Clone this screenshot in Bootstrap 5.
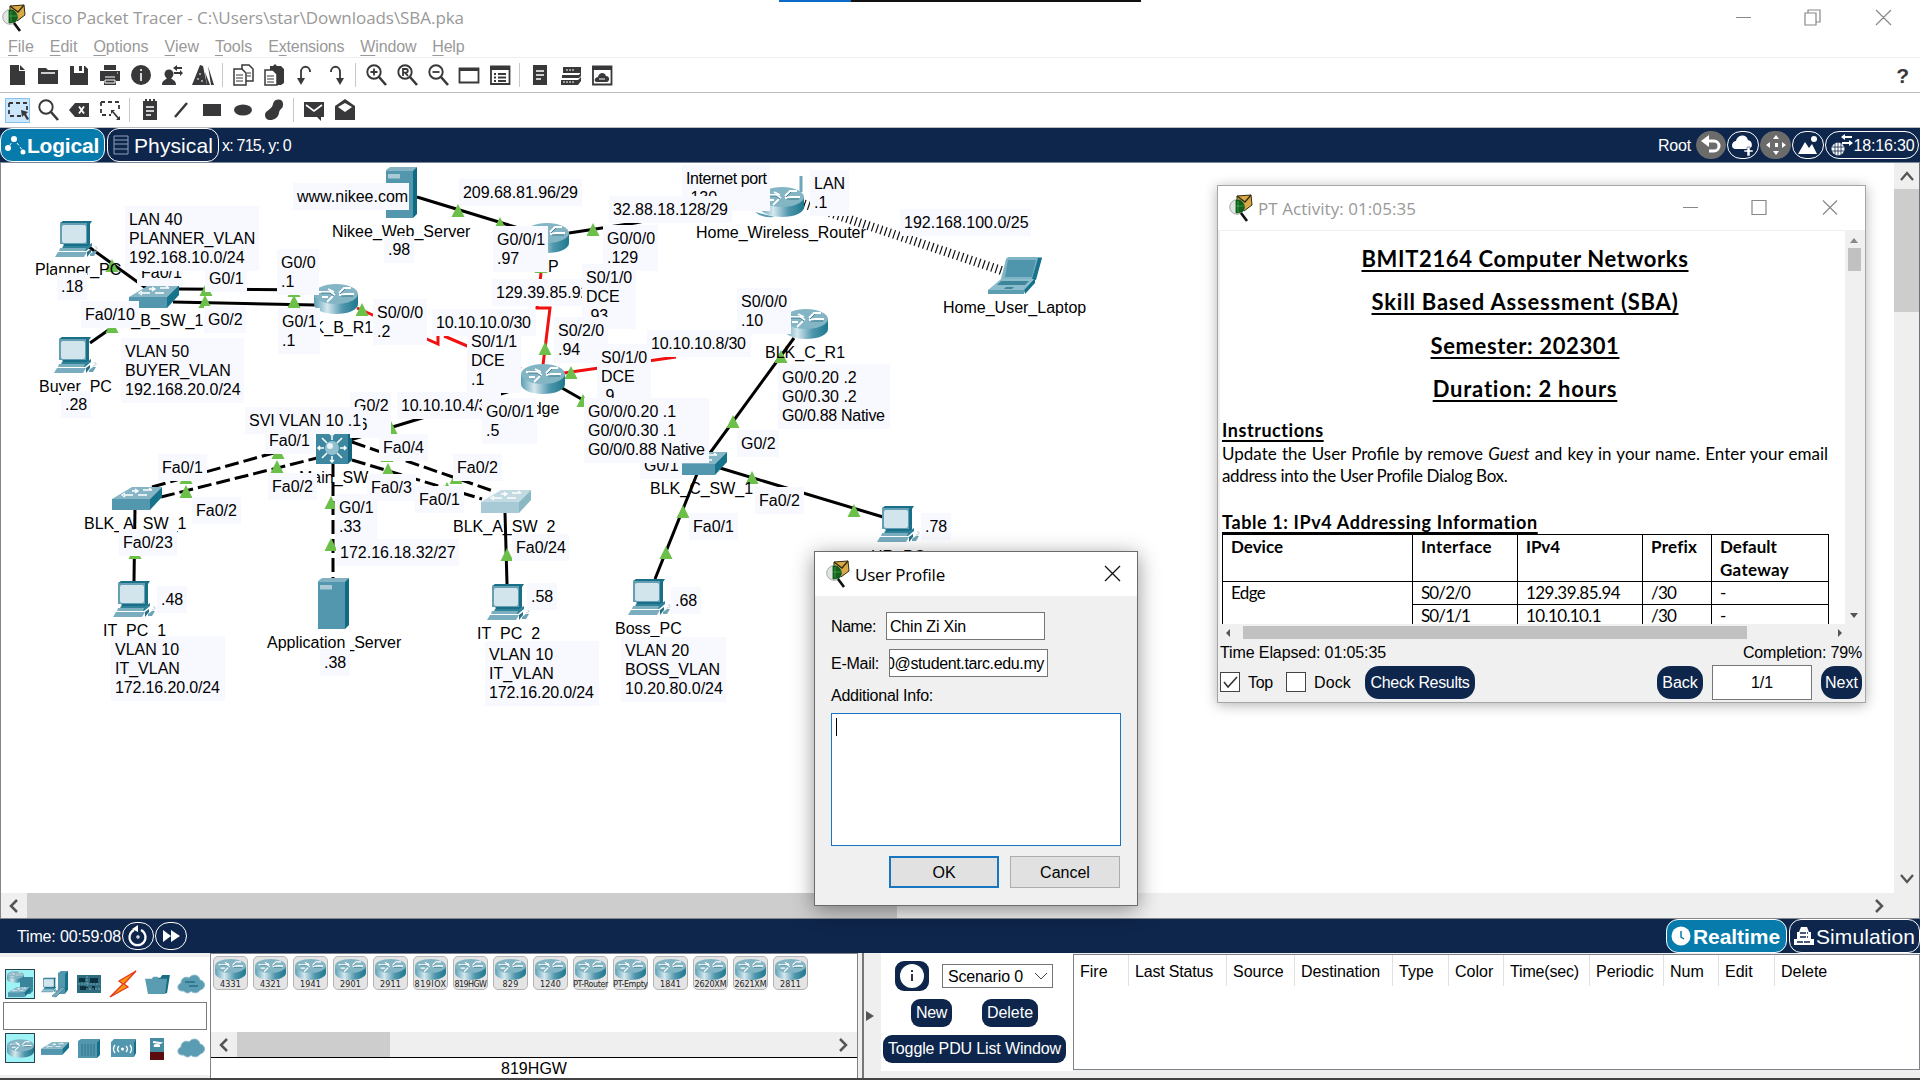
<!DOCTYPE html>
<html lang="en">
<head>
<meta charset="utf-8">
<title>Cisco Packet Tracer</title>
<link href="https://cdn.jsdelivr.net/npm/bootstrap@5.3.0/dist/css/bootstrap.min.css" rel="stylesheet">
<style>
html,body{height:100%;overflow:hidden}
body{width:1920px;height:1080px;background:#fff;font:16px/19px "Liberation Sans",Arial,sans-serif;color:#000}
svg{display:block;flex:none}
.ttl{font-family:"Open Sans","Noto Sans",sans-serif;font-size:17px;white-space:nowrap}
.app-title{height:35px;color:#999}
.topmark{left:779px;top:0;width:362px;height:2px;background:linear-gradient(90deg,#0a6cc8 72px,#111 72px)}
.menus{height:23px;gap:16px;padding:2px 0 0 8px;color:#999;border-bottom:1px solid #eee}
.menus u{text-underline-offset:3px}
.tools{height:35px;border-bottom:1px solid #bcbcbc;padding-left:1px;color:#38383a}
.cell{width:31px;height:25px;display:flex;align-items:center;justify-content:center;flex:none}
.cell svg{width:24px;height:24px}
.sel{width:25px;margin:0 3px 0 4px;background:#cce6fb;border:1px solid #84c3f0}
.sel + .cell{margin-left:-1px}
.sep{width:1px;height:24px;background:#c8c8c8;margin:0 4px;flex:none}
.navy{background:#0e264b;color:#fff;height:35px;flex:none}
.navy.upper{border-bottom:1px solid #7b8798}
.tab{height:34px;border:1px solid #fff;border-radius:12px;display:flex;align-items:center;font-size:21px;white-space:nowrap;flex:none}
.tab.on{background:#067bac;font-weight:700}
.pill{height:28px;border:1px solid #fff;border-radius:14px;display:flex;align-items:center;justify-content:center;flex:none}
.pill.grey{background:#6b6b6b;border-color:#6b6b6b}
.stage{height:756px;border-left:1px solid #85868a;border-bottom:1px solid #85868a;flex:none}
.bar{background:#efefef;color:#505050}
.thumb{background:#cdcdcd}
.topo text{font-size:16px;fill:#000}
.lower{height:125px;background:#efefef;flex:none}
.kit{width:210px;margin:4px 0 3px;background:#fff;padding:12px 0 0 3px}
.kit .kcell{width:34px;height:30px;display:flex;align-items:center;justify-content:center}
.kit .pick{width:30px;margin:0 3px 0 2px;background:#9df3f6;border:1px solid #26424d}
.finder{width:204px;height:28px;border:1px solid #7a7a7a;margin:3px 0 3px}
.models{width:648px;border:1px solid #7d828b;border-bottom:0;background:#fff}
.tile{width:35px;height:34px;border:1px solid #b5b5b5;border-radius:5px;background:#e4e4e4;font:8px/9px "DejaVu Sans",sans-serif;text-align:center;color:#222;display:flex;flex-direction:column;align-items:center;padding-top:2px;letter-spacing:-.3px;white-space:nowrap}
.split{width:15px;margin-left:4px;border-left:2px solid #777;background:#efefef}
.pdu{width:192px;background:#fff;height:118px;padding:8px 0 0 2px}
.nbtn{background:#0e264b;color:#fff;border:0;border-radius:9px;padding:0;height:28px;line-height:28px;text-align:center;white-space:nowrap;flex:none}
.ptable{width:847px;height:116px;border:1px solid #7d828b;background:#fff;margin-top:1px}
.ptable>span{height:31px;padding:7px 0 0 6px;border-right:1px solid #e1e1e1;flex:none;white-space:nowrap;line-height:19px}
.win{position:absolute;z-index:5;display:flex;flex-direction:column;background:#f0f0f0}
.act{left:1217px;top:185px;width:649px;height:518px;border:1px solid #a6a6a6;box-shadow:0 2px 12px rgba(0,0,0,.3)}
.prof{left:814px;top:551px;width:324px;height:355px;border:1px solid #6b6b6b;box-shadow:0 4px 20px rgba(0,0,0,.42)}
.wtitle{height:44px;background:#fff;flex:none;display:flex;align-items:center}
.doc{font-family:Lato,"Open Sans",sans-serif;background:#fff;width:625px;height:393px;overflow:hidden;white-space:nowrap;padding:0 0 0 2px}
.doc h1{font-size:22px;line-height:44px;height:43.7px;font-weight:700;margin:0;text-align:center;width:606px}
.doc h2{font-size:18px;line-height:22px;font-weight:700;margin:0}
.doc h1 span,.doc h2 span{text-decoration:underline;text-decoration-thickness:2px;text-underline-offset:3px;text-decoration-skip-ink:none}
.doc p{margin:0;line-height:22px;font-size:17px}
.grid5{border-collapse:collapse;width:607px;table-layout:fixed;font-size:17px;line-height:23px}
.grid5 td,.grid5 th{border:1px solid #000;padding:0 0 0 8px;vertical-align:top;height:23px}
.grid5 td{line-height:22px}
.sbox{background:#fff;border:1px solid #767676;flex:none}
.winbtn{background:#e1e1e1;border:1px solid #adadad;width:110px;height:32px;border-radius:0;padding:2px 0 0;line-height:28px}
.winbtn.def{border:2px solid #1a75c0;padding-top:1px}
</style>
</head>
<body class="d-flex flex-column position-relative">
<svg width="0" height="0" class="position-absolute">
<defs>
<linearGradient id="gr" x1="0" x2="1"><stop offset="0" stop-color="#5a9fb4"/><stop offset=".3" stop-color="#d5e8ee"/><stop offset=".65" stop-color="#4f96ac"/><stop offset="1" stop-color="#1d788e"/></linearGradient>
<symbol id="logo" viewBox="0 0 24 28"><path d="M8 2L22 1 23 11 15 17 8 12Z" fill="#d9a946" stroke="#332a10"/><path d="M8 2l8 6 6-7" fill="none" stroke="#332a10" stroke-width="1.3"/><circle cx="8" cy="13" r="7.3" fill="#dfe5df" stroke="#aaa"/><path d="M7 6a7 7 0 0 1 6 12l-6 1z" fill="#155e1e" stroke="#051" stroke-width=".8"/><path d="M9 7v11M7 12h8" stroke="#47b64d" stroke-width=".7"/><path d="M12 19l6 8" stroke="#111" stroke-width="2.6"/></symbol>
<symbol id="router" viewBox="0 0 44 30"><path d="M0 10v10c0 6 10 10 22 10s22-4 22-10V10z" fill="url(#gr)"/><ellipse cx="22" cy="10" rx="22" ry="10" fill="#84b5c4"/><path d="M5 8h11l5 3M14 5l6 3M25 9l5-5h7M25 11l6-1h9M19 12l-6 6M8 13h6" fill="none" stroke="#fff" stroke-width="1.8"/><path d="M7 9h9l4 3M26 10l5-5M27 12h12" fill="none" stroke="#2f7184" stroke-width=".8"/></symbol>
<symbol id="switch" viewBox="0 0 50 23"><path d="M0 12L20 0h30L38 12z" fill="#86b6c6"/><path d="M0 12h38v11H0z" fill="#5397af"/><path d="M38 12L50 0v10L38 23z" fill="#17738b"/><path d="M20 4h6m-3-2l3 2-3 2M31 3h9m-3-2l3 2M12 8h9m-8-2l-3 2 3 2M26 8h9" stroke="#fff" stroke-width="1.3" fill="none"/></symbol>
<symbol id="pc" viewBox="0 0 44 36"><path d="M5 2L8 0H37L35 3V24L31 27H9z" fill="#186f87"/><path d="M5 2H32V23H5z" fill="#659fb3"/><rect x="7" y="4" width="24" height="18" rx="2" fill="#d3e5ec"/><path d="M8 25h24l5-3v3l-6 5H6z" fill="#2f8298"/><path d="M5 27h26l-1 3H4z" fill="#7bb0c1"/><path d="M3 31h29l-3 5H0z" fill="#79adbf"/><path d="M32 31l4-3v3l-4 5z" fill="#286f84"/><path d="M35 33l4-3h3l-3 5h-4z" fill="#6ba4b6"/><path d="M39 29c4 0 4-4 1-3" fill="none" stroke="#b7cbd2"/></symbol>
<symbol id="server" viewBox="0 0 31 51"><path d="M0 3L4 0H31L28 4H0z" fill="#83b3c2"/><path d="M0 4h27v47H0z" fill="#5297ae"/><path d="M27 4l4-4v47l-4 4z" fill="#0f6b82"/><rect x="2" y="7" width="12" height="4.500" fill="#a8cbd6"/></symbol>
<symbol id="laptop" viewBox="0 0 54 37"><path d="M18 2L20 0H54L47 22H13z" fill="#7fb4c4"/><path d="M20 3H48L44 20H17z" fill="#4f95ac"/><path d="M50 1l4 0-6 22-4-1z" fill="#17738b"/><path d="M13 22H46L36 33H0z" fill="#8bbccb"/><path d="M0 33h36v4H0z" fill="#5c9db2"/><path d="M36 33L47 21v5L37 37z" fill="#14708a"/><path d="M13 24h28l-4 4H9z" fill="#3e849b"/><path d="M18 30h8l-2 2h-8z" fill="#3e849b"/></symbol>
<symbol id="core" viewBox="0 0 36 36"><path d="M0 4L4 0H36L32 4V36H0z" fill="#3d88a0"/><path d="M32 4l4-4v32l-4 4z" fill="#14667c"/><g stroke="#fff" stroke-width="1.500" fill="none"><path d="M16 5v7M14 7l2-2 2 2M16 28v6M14 32l2 2 2-2M2 20h6M4 18l-2 2 2 2M24 20h6M28 18l2 2-2 2M6 10l5 5M26 10l-5 5M6 30l5-5M26 30l-5-5"/></g><circle cx="16" cy="20" r="7" fill="#93c0ce"/><circle cx="14" cy="18" r="3" fill="#e9f4f7"/></symbol>
<symbol id="cloud" viewBox="0 0 28 20"><path d="M7 17C0 18-1 11 4 9 4 4 9 2 12 4c4-5 10-3 11 2 6 1 6 9 0 10-2 4-8 3-9 1-2 3-6 2-7 0z" fill="#5a9db3" stroke="#86b8c8"/></symbol>
<symbol id="mag" viewBox="0 0 24 24"><circle cx="10" cy="9" r="6.700" fill="none" stroke="currentColor" stroke-width="1.900"/><path d="M15 14l7 8" stroke="currentColor" stroke-width="2.600"/></symbol>
<symbol id="fold" viewBox="0 0 28 22"><path d="M9 4h8l2-3h8l-3 19-4 1H8z" fill="#166c80"/><path d="M1 5h7l2-2h4l1 2h9l-2 16H4z" fill="#5a9db3"/></symbol>
</defs></svg>

<div class="position-absolute topmark"></div>
<header class="bg-white flex-shrink-0">
 <div class="app-title d-flex align-items-center">
  <svg width="24" height="28" style="margin:0 5px 0 2px"><use href="#logo"/></svg><span class="ttl" data-w="433">Cisco Packet Tracer - C:\Users\star\Downloads\SBA.pka</span>
  <svg width="170" height="20" class="ms-auto me-3" viewBox="0 0 170 20" fill="none" stroke="#888" stroke-width="1.200"><path d="M2 9.500h15M71 5h11v12H71zM74 5V2h12v12h-4M142 2l15 15M157 2l-15 15"/></svg>
 </div>
 <nav class="menus d-flex"><span><u>F</u>ile</span><span><u>E</u>dit</span><span><u>O</u>ptions</span><span><u>V</u>iew</span><span><u>T</u>ools</span><span data-w="76">E<u>x</u>tensions</span><span data-w="56"><u>W</u>indow</span><span data-w="32"><u>H</u>elp</span></nav>
 <div class="tools d-flex align-items-center" id="main"></div>
 <div class="tools d-flex align-items-center" id="draw"></div>
</header>

<div class="navy upper d-flex align-items-center">
 <div class="tab on" style="width:105px"><svg width="22" height="24" viewBox="0 0 22 24" class="ms-1" fill="#fff"><circle cx="9" cy="6" r="3"/><circle cx="3" cy="15" r="3"/><circle cx="18" cy="19" r="2.500"/><path d="M9 6l-6 9M9 6l9 12" stroke="#fff" stroke-dasharray="3 2"/></svg><span data-w="72">Logical</span></div>
 <div class="tab" style="width:112px;margin-left:2px"><svg width="16" height="20" viewBox="0 0 16 20" style="margin:0 5px 0 5px" fill="none" stroke="#8da0b8"><path d="M1 1h14v18H1zM1 5h14M1 9h14M1 14h14"/></svg><span data-w="79">Physical</span></div>
 <span data-w="69" style="margin-left:3px">x: 715, y: 0</span>
 <div class="ms-auto d-flex align-items-center" style="gap:1px;padding-right:1px">
  <span class="me-1" data-w="33">Root</span>
  <span class="pill grey" style="width:30px"><svg width="22" height="22" viewBox="0 0 22 22"><path d="M7 7h7a5 5 0 0 1 0 10H9" fill="none" stroke="#fff" stroke-width="3"/><path d="M1 7l8-6v12z" fill="#fff"/></svg></span>
  <span class="pill" style="width:32px"><svg width="24" height="22" viewBox="0 0 24 22" fill="#fff"><path d="M4 15c-5-1-3-8 1-8 1-6 10-8 12-1 5 1 5 8 1 9z"/><path d="M16 13h3v3h3v2h-3v4h-3v-4h-3v-2h3z" stroke="#0e264b" stroke-width=".5"/></svg></span>
  <span class="pill grey" style="width:31px"><svg width="22" height="22" viewBox="0 0 22 22" fill="#fff"><path d="M11 1l3 4H8zM11 21l3-4H8zM1 11l4-3v6zM21 11l-4-3v6zM10 9h3v4h-3z"/></svg></span>
  <span class="pill" style="width:32px"><svg width="22" height="20" viewBox="0 0 22 20" fill="#fff"><path d="M1 19L8 7l4 6 3-4 5 10z"/><circle cx="17" cy="4" r="3"/></svg></span>
  <span class="pill" style="width:94px"><svg width="24" height="24" viewBox="0 0 24 24"><circle cx="8" cy="16" r="6.500" fill="#fff"/><path d="M8 9v14M2 14h12M2 18h12M5 10v12M11 10v12" stroke="#0e264b" stroke-width=".8"/><path d="M13 4h9M12 10h8" stroke="#fff" stroke-width="2"/><path d="M15 1v6l-4-3zM19 7v6l4-3z" fill="#fff"/></svg><span data-w="61">18:16:30</span></span>
 </div>
</div>

<main class="stage d-flex">
 <div class="flex-grow-1 d-flex flex-column">
  <svg class="topo" id="topo" width="1893" height="730" viewBox="1 163 1893 730"></svg>
  <div class="bar d-flex align-items-center" style="height:25px"><svg width="26" height="24"><path d="M16 6l-6 6 6 6" fill="none" stroke="#555" stroke-width="2.500"/></svg><div class="thumb h-100" style="width:870px"></div><svg class="ms-auto" width="26" height="24"><path d="M8 6l6 6-6 6" fill="none" stroke="#555" stroke-width="2.500"/></svg></div>
 </div>
 <div class="bar d-flex flex-column align-items-center border-end border-secondary" style="width:26px"><svg width="26" height="26"><path d="M7 17l6-7 6 7" fill="none" stroke="#555" stroke-width="2.300"/></svg><div class="thumb w-100" style="height:123px"></div><svg class="mt-auto" style="margin-bottom:26px" width="26" height="26"><path d="M7 9l6 7 6-7" fill="none" stroke="#555" stroke-width="2.300"/></svg></div>
</main>

<div class="navy d-flex align-items-center" style="height:34px">
 <span data-w="104" style="margin-left:17px">Time: 00:59:08</span>
 <span class="pill" style="width:32px;margin:0 1px"><svg width="22" height="22" viewBox="0 0 22 22" fill="none" stroke="#fff" stroke-width="2.200"><path d="M7 5a8 8 0 1 0 7 0"/><path d="M5 4l6-4v7z" fill="#fff" stroke="none"/><circle cx="11" cy="12" r=".6"/></svg></span>
 <span class="pill" style="width:32px"><svg width="20" height="16" viewBox="0 0 20 16" fill="#fff"><path d="M2 2l8 6-8 6zM10 2l9 6-9 6z"/></svg></span>
 <div class="tab on ms-auto" style="width:121px"><svg width="23" height="24" viewBox="0 0 23 24" style="margin-left:3px"><circle cx="11" cy="12" r="9.500" fill="#fff"/><path d="M11 7v6l3 2" fill="none" stroke="#067bac" stroke-width="1.500"/></svg><span data-w="87">Realtime</span></div>
 <div class="tab" style="width:131px;margin-left:2px"><svg width="24" height="24" viewBox="0 0 24 24" fill="#fff" style="margin-left:2px"><path d="M5 15V8h2l2-5h6l2 5h2v7h3v6H2v-6z"/><path d="M8 9h8M8 13h8M5 18h14" stroke="#0e264b" stroke-width="1.500" stroke-dasharray="6 1"/></svg><span data-w="99">Simulation</span></div>
</div>

<footer class="lower d-flex">
 <div class="kit">
  <div class="d-flex">
   <div class="kcell pick"><svg width="28" height="28" viewBox="0 0 28 28"><use href="#router" width="17" height="12" x="1" y="1"/><path d="M14 10l3-3h10v14l-3 3H14z" fill="#37849b"/><use href="#switch" width="22" height="12" x="2" y="16"/></svg></div>
   <div class="kcell"><svg width="28" height="28" viewBox="0 0 28 28"><path d="M17 3l3-2h7v19l-3 4h-7z" fill="#5397af"/><path d="M24 4l3-3v18l-3 4z" fill="#14708a"/><use href="#pc" width="18" height="16" y="7"/><path d="M11 26l10-9 3 1-9 9z" fill="#75aabd" stroke="#2b7389" stroke-width=".6"/></svg></div>
   <div class="kcell"><svg width="26" height="20" viewBox="0 0 26 20"><path d="M1 1h24v18H1z" fill="#2f6c80"/><path d="M3 4h6v4H3zM14 4h8v5h-8zM4 12h8v4H4zM16 12h3v4h-3z" fill="#0c313f"/><path d="M2 10h22M11 2v15M13 15h11" stroke="#8ab8c6" stroke-width=".8" stroke-dasharray="2 1"/></svg></div>
   <div class="kcell"><svg width="28" height="28" viewBox="0 0 28 28"><path d="M27 1L10 11l4 3L1 27l18-10-4-3z" fill="#f69a13" stroke="#e8361b" stroke-width="1.300"/></svg></div>
   <div class="kcell"><svg width="27" height="21"><use href="#fold"/></svg></div>
   <div class="kcell"><svg width="28" height="20" viewBox="0 0 28 20"><use href="#cloud"/><path d="M8 8h10M12 12h9" stroke="#266e83" stroke-width="1.500"/></svg></div>
  </div>
  <div class="finder"></div>
  <div class="d-flex">
   <div class="kcell pick"><svg width="27" height="19"><use href="#router"/></svg></div>
   <div class="kcell"><svg width="28" height="15"><use href="#switch"/></svg></div>
   <div class="kcell"><svg width="24" height="21" viewBox="0 0 24 21"><path d="M1 3l3-2h19l-3 3v16H1z" fill="#5397af"/><path d="M20 4l3-3v16l-3 3z" fill="#14708a"/><path d="M5 6v12M8 6v12M11 6v12M14 6v12M17 6v12" stroke="#2f7489"/></svg></div>
   <div class="kcell"><svg width="27" height="20" viewBox="0 0 27 20"><path d="M1 4l3-3h22l-2 3v15H1z" fill="#5397af"/><path d="M24 4l2-3v14l-2 4z" fill="#14708a"/><circle cx="12.500" cy="11" r="1.500" fill="#fff"/><path d="M9 8q-3 3 0 6M5 7q-3 4 0 8M16 8q3 3 0 6M20 7q3 4 0 8" stroke="#fff" fill="none" stroke-width="1.300"/></svg></div>
   <div class="kcell"><svg width="16" height="25" viewBox="0 0 16 25"><path d="M1 2h14v15H1z" fill="#468ca3"/><path d="M1 16h14v8H1z" fill="#5b0c0f"/><path d="M4 6l7 1-6 3h6" fill="none" stroke="#fff" stroke-width="2"/></svg></div>
   <div class="kcell"><svg width="28" height="20"><use href="#cloud"/></svg></div>
  </div>
 </div>
 <div class="models d-flex flex-column">
  <div class="d-flex" id="tiles" style="gap:5px;padding:2px 0 0 2px;height:80px"></div>
  <div class="bar d-flex align-items-center" style="height:25px"><svg width="26" height="24"><path d="M16 6l-6 6 6 6" fill="none" stroke="#555" stroke-width="2.500"/></svg><div class="thumb h-100" style="width:153px"></div><svg class="ms-auto" width="28" height="24"><path d="M11 6l6 6-6 6" fill="none" stroke="#555" stroke-width="2.500"/></svg></div>
  <div class="text-center flex-grow-1 bg-white" style="border-top:1px solid #000;padding-top:1px"><span data-w="66">819HGW</span></div>
 </div>
 <div class="split d-flex align-items-center"><svg width="11" height="12"><path d="M2 1l8 5-8 5z" fill="#555"/></svg></div>
 <div style="width:4px"></div>
 <div class="pdu">
  <div class="d-flex align-items-center" style="padding-left:12px"><span class="nbtn" style="width:34px;height:30px"><svg width="34" height="30"><ellipse cx="17" cy="15" rx="12" ry="12" fill="#fff"/><path d="M17 13v7M17 9v2" stroke="#333" stroke-width="2"/></svg></span>
  <div class="sbox d-flex align-items-center" style="width:111px;height:24px;margin-left:13px;padding-left:5px"><span data-w="75">Scenario 0</span><svg width="14" height="10" class="ms-auto me-1"><path d="M1 2l6 6 6-6" fill="none" stroke="#444"/></svg></div></div>
  <div class="d-flex" style="margin:8px 0 8px 28px;gap:30px"><span class="nbtn" style="width:41px"><span data-w="31">New</span></span><span class="nbtn" style="width:56px"><span data-w="46">Delete</span></span></div>
  <div class="nbtn" style="width:183px"><span data-w="173">Toggle PDU List Window</span></div>
 </div>
 <div class="ptable d-flex">
  <span style="width:55px">Fire</span><span style="width:98px"><b class="fw-normal" data-w="78">Last Status</b></span><span style="width:68px">Source</span><span style="width:98px"><b class="fw-normal" data-w="79">Destination</b></span><span style="width:56px">Type</span><span style="width:55px">Color</span><span style="width:86px"><b class="fw-normal" data-w="69">Time(sec)</b></span><span style="width:74px">Periodic</span><span style="width:55px">Num</span><span style="width:56px">Edit</span><span class="border-0">Delete</span>
 </div>
</footer>
<div class="flex-grow-1" style="background:#444"></div>

<section class="win act">
 <div class="wtitle" style="color:#999"><svg width="24" height="30" style="margin:0 5px 0 11px"><use href="#logo"/></svg><span class="ttl" data-w="158">PT Activity: 01:05:35</span><svg width="170" height="20" viewBox="0 0 170 20" class="ms-auto" style="margin-right:14px" fill="none" stroke="#888" stroke-width="1.200"><path d="M2 9.500h15M71 2.500h14v14H71zM142 2.500l14 14M156 2.500l-14 14"/></svg></div>
 <div class="d-flex" style="padding:1px 2px 0 2px">
  <div class="doc">
   <h1 style="margin-top:6px;height:43px"><span data-w="327">BMIT2164 Computer Networks</span></h1>
   <h1><span data-w="307">Skill Based Assessment (SBA)</span></h1>
   <h1><span data-w="189">Semester: 202301</span></h1>
   <h1><span data-w="185">Duration: 2 hours</span></h1>
   <h2 style="margin-top:8px"><span data-w="102">Instructions</span></h2>
   <p style="margin-top:2px"><span data-w="606" data-by="word">Update the User Profile by remove <i>Guest</i> and key in your name. Enter your email</span></p>
   <p><span data-w="285">address into the User Profile Dialog Box.</span></p>
   <h2 style="margin-top:24px;margin-bottom:1px"><span data-w="316">Table 1: IPv4 Addressing Information</span></h2>
   <table class="grid5"><colgroup><col style="width:190px"><col style="width:105px"><col style="width:125px"><col style="width:69px"><col></colgroup>
    <tr><th><span data-w="52">Device</span></th><th><span data-w="71">Interface</span></th><th><span data-w="34">IPv4</span></th><th><span data-w="46">Prefix</span></th><th><span data-w="57">Default</span><br><span data-w="69">Gateway</span></th></tr>
    <tr><td rowspan="2"><span data-w="34">Edge</span></td><td><span data-w="49">S0/2/0</span></td><td><span data-w="94">129.39.85.94</span></td><td><span data-w="25">/30</span></td><td>-</td></tr>
    <tr><td><span data-w="49">S0/1/1</span></td><td><span data-w="75">10.10.10.1</span></td><td><span data-w="25">/30</span></td><td>-</td></tr>
   </table>
  </div>
  <div class="d-flex flex-column align-items-center" style="width:18px"><svg width="16" height="17"><path d="M8 7l4 5H4z" fill="#888"/></svg><div style="width:13px;height:23px;background:#c1c1c1"></div><svg class="mt-auto mb-1" width="16" height="10"><path d="M8 8l4-5H4z" fill="#555"/></svg></div>
 </div>
 <div class="d-flex align-items-center" style="height:17px"><svg width="25" height="14"><path d="M8 7l4-4v8z" fill="#555"/></svg><div style="width:504px;height:13px;background:#c1c1c1"></div><svg class="ms-auto" width="42" height="14"><path d="M19 7l-4-4v8z" fill="#555"/></svg></div>
 <div class="d-flex justify-content-between" style="padding:2px 3px 0 2px;height:23px"><span data-w="166">Time Elapsed: 01:05:35</span><span data-w="119">Completion: 79%</span></div>
 <div class="d-flex align-items-center" style="padding:0 3px 0 2px;height:36px"><svg width="20" height="20" style="background:#fff;border:1px solid #444"><path d="M3 9l4 5 9-10" fill="none" stroke="#333" stroke-width="1.600"/></svg><span style="margin-left:8px" data-w="25">Top</span><div class="sbox" style="width:20px;height:20px;margin:0 8px 0 13px;border-color:#444"></div><span data-w="37">Dock</span>
 <span class="nbtn" style="width:110px;height:33px;line-height:33px;border-radius:14px;margin-left:14px"><span data-w="99">Check Results</span></span>
 <span class="nbtn ms-auto" style="width:46px;height:33px;line-height:33px;border-radius:14px">Back</span><span class="sbox text-center" style="width:100px;height:35px;line-height:34px;margin:0 9px">1/1</span><span class="nbtn" style="width:41px;height:33px;line-height:33px;border-radius:14px">Next</span></div>
</section>

<section class="win prof">
 <div class="wtitle"><svg width="24" height="28" style="margin:0 5px 0 11px"><use href="#logo"/></svg><span class="ttl" data-w="90">User Profile</span><svg width="18" height="18" class="ms-auto" style="margin-right:15px" fill="none" stroke="#111" stroke-width="1.300"><path d="M1 1l15 15M16 1L1 16"/></svg></div>
 <div style="padding:16px 16px 0">
  <div class="d-flex align-items-center mb-2"><span style="width:55px"><span data-w="45">Name:</span></span><div class="sbox" style="width:159px;height:28px;padding:4px 3px"><span data-w="76">Chin Zi Xin</span></div></div>
  <div class="d-flex align-items-center" style="margin-top:9px"><span style="width:58px"><span data-w="48">E-Mail:</span></span><div class="sbox d-flex justify-content-end overflow-hidden" style="width:159px;height:28px;padding:4px 0"><span class="flex-shrink-0" data-w="158" style="margin-right:3px">0@student.tarc.edu.my</span></div></div>
  <div style="margin-top:9px"><span data-w="102">Additional Info:</span></div>
  <div class="bg-white" style="width:290px;height:133px;border:1px solid #1a75c0;margin-top:8px;padding:4px"><svg width="2" height="18"><path d="M.5 0v18" stroke="#000"/></svg></div>
  <div class="d-flex justify-content-end" style="gap:11px;margin:10px 1px 0"><button class="winbtn def">OK</button><button class="winbtn">Cancel</button></div>
 </div>
</section>

<script src="https://cdn.jsdelivr.net/npm/bootstrap@5.3.0/dist/js/bootstrap.bundle.min.js"></script>
<script>
// toolbar glyphs, 24x24
const F='fill="currentColor"',S='fill="none" stroke="currentColor" stroke-width="1.8"';
const g={
new:`<path ${F} d="M5 2h9v6h6v14H5z"/><path ${F} d="M15 2l5 5h-5z"/>`,
open:`<path ${F} d="M2 5h8l2 2h10v14H2z"/><path d="M5 10h14" stroke="#fff" stroke-width="1.500"/>`,
save:`<path ${F} d="M3 3h15l3 3v16H3z"/><path fill="#fff" d="M7 3h10v7H7z"/><path ${F} d="M12 3h3v5h-3z"/>`,
print:`<path ${F} d="M6 2h12v5H6zM2 8h20v10h-4v4H6v-4H2z"/><path d="M7 14h10M7 17h10v3H7zM19 10h1" stroke="#fff" fill="none"/>`,
info:`<circle ${F} cx="12" cy="12" r="10"/><path d="M12 10v8M12 6v2" stroke="#fff" stroke-width="1.600"/>`,
user:`<circle ${F} cx="9" cy="11" r="4.500"/><path ${F} d="M2 22c0-5 4-5 5-7h4c1 2 5 2 5 7z"/><path ${S} d="M15 5h7M14 10h8"/><path ${F} d="M17 2v6l-4-3zM20 7v6l3-3z"/>`,
wiz:`<path ${F} d="M9 2l3 1 4 19H1z"/><path ${F} d="M17 3l6 19h-3zM14 9l5 13h-3z"/><path d="M8 11h2M6 16h2M10 18h2" stroke="#fff"/>`,
copy:`<path fill="#fff" stroke="currentColor" stroke-width="1.500" d="M11 2h7l4 4v12H11z"/><path fill="#fff" stroke="currentColor" stroke-width="1.500" d="M3 6h8l4 4v12H3z"/><path stroke="currentColor" d="M5 12h7M5 15h7M5 18h7M16 10h4M16 13h4"/>`,
paste:`<path ${F} d="M8 3h3l2-2 2 2h4l3 3v14l-3 2H8z"/><path fill="#fff" stroke="currentColor" stroke-width="1.500" d="M3 7h8l4 4v11H3z"/><path stroke="currentColor" d="M5 13h7M5 16h7M5 19h7"/>`,
undo:`<path ${S} d="M17 9c0-7-9-7-9 0v9"/><path ${F} d="M4 15h8l-4 7z"/>`,
redo:`<path ${S} d="M7 9c0-7 9-7 9 0v9"/><path ${F} d="M12 15h8l-4 7z"/>`,
zin:`<use href="#mag"/><path ${S} d="M10 5.500v7M6.500 9h7"/>`,
zr:`<use href="#mag"/><path ${S} stroke-width="1.400" d="M8 13V6h3a1.800 1.800 0 0 1 0 3.600H8M10 9.600l3 3.200"/>`,
zout:`<use href="#mag"/><path ${S} d="M6.500 9h7"/>`,
win:`<path ${S} d="M2.500 5.500h19v14h-19z"/><path ${F} d="M2 5h20v3H2z"/>`,
list:`<path ${S} d="M3 3.500h18.500v17.500H3z"/><path ${F} d="M2 3h20v4H2z"/><path ${S} d="M6 11h2M10 11h8M6 14.500h2M10 14.500h8M6 18h2M10 18h8"/>`,
note:`<path ${F} d="M5 2h14v20H5z"/><path d="M8 8h8M8 12h8M8 16h5" stroke="#fff" stroke-width="1.400"/>`,
rack:`<path ${F} d="M4 4h18v6H4zM3 12h17l2-3v4l-2 2H3zM2 17h17v5H2zM19 17l3-3v4l-3 4z"/><path d="M7 7h8M4 19h12" stroke="#fff" stroke-dasharray="2 1"/>`,
cwin:`<path ${S} d="M3 3.500h18.500v18H3z"/><path ${F} d="M2 3h20v4H2zM6 19c-3-2 0-5 2-5 1-5 7-5 8-1 4 0 4 5 1 6z"/><path stroke="#fff" d="M9 16h6"/>`,
sel:`<path ${S} stroke-dasharray="4 3" d="M3 5h18v9M3 5v13h12"/><path ${F} d="M15 12l7 2-2 2 3 5-2 1-3-5-2 2z"/>`,
mag:`<use href="#mag"/>`,
del:`<path ${F} d="M2 12l6-7h14v14H8z"/><path d="M12 8.500l5 7M17 8.500l-5 7" stroke="#fff" stroke-width="1.800"/>`,
res:`<path ${S} stroke-dasharray="4 3" d="M3 4h18v7M3 4v13h10"/><path ${S} d="M15 14l6 7"/><path ${F} d="M13 12h4l-4 4zM22 22h-4l4-4z"/>`,
pad:`<path ${F} d="M5 3h2V1h2v2h2V1h2v2h2V1h2v2h2v19H5z"/><path d="M8 9h8M8 13h8M8 17h5" stroke="#fff" stroke-width="1.500"/>`,
line:`<path stroke="currentColor" stroke-width="2.500" d="M6 19L18 5"/>`,
rect:`<path ${F} d="M3 6h18v12H3z"/>`,
ell:`<ellipse ${F} cx="12" cy="12" rx="9" ry="5.500"/>`,
free:`<path ${F} d="M11 6c1-6 11-6 10 1 0 4-4 4-4 8-1 8-14 10-14 2 0-5 7-5 8-11z"/>`,
mail:`<path ${F} d="M2 4h20v15h-3v4l-4-4H2z"/><path d="M4 7l8 6 8-6" stroke="#fff" fill="none" stroke-width="1.600"/>`,
omail:`<path ${F} d="M2 8l10-7 10 7v14H2z"/><path fill="#fff" d="M5 9l7-4 7 4-7 5z"/>`};
const cell=n=>n==='|'?'<i class="sep"></i>':`<span class="cell ${n==='sel'?'sel':''}"><svg viewBox="0 0 24 24">${g[n]}</svg></span>`;
main.innerHTML='new open save print info user wiz | copy paste undo redo | zin zr zout win list | note rack cwin'.split(' ').map(cell).join('')+'<b class="ms-auto" style="font-size:21px;margin-right:11px">?</b>';
draw.innerHTML='sel mag del res | pad line rect ell free | mail omail'.split(' ').map(cell).join('');
tiles.innerHTML='4331 4321 1941 2901 2911 819IOX 819HGW 829 1240 PT-Router PT-Empty 1841 2620XM 2621XM 2811'.split(' ').map(t=>`<div class="tile"><svg width="31" height="21"><use href="#router"/></svg><span data-w="${t.length>6?32:t.length>4?30:t.length*5}">${t}</span></div>`).join('');

// topology: cables, link lights, devices, names, notes (bottom to top)
const ln=(d,c='#000',x='')=>`<path d="M${d}" fill="none" stroke="${c}" stroke-width="3" ${x}/>`,dash='stroke-dasharray="14 5"';
let o=['89,247L150,291','178,289L320,290','173,302L315,305','90,343L137,310','417,197L548,237','569,233L635,223L745,200','562,388L590,404','350,440L520,388','794,338L710,453','697,474L655,579','720,468L883,517','135,508L134,581','505,513L507,584'].map(d=>ln(d)).join('');
o+=['152,487L316,441','161,497L317,458','352,442L493,491','352,460L482,499','333,463V578'].map(d=>ln(d,'#000',dash)).join('');
o+=['541,273L537,308L550,308L543,365','564,373L676,357','357,308L438,344L438,334','444,336L521,369'].map(d=>ln(d,'#f01010')).join('');
o+='<path d="M804,204L1003,271" stroke="#111" stroke-width="9" stroke-dasharray="1.200 3.300" fill="none"/>';
const T=[[112,272],[112,333],[206,296],[205,308],[294,297],[294,308],[362,316],[458,217],[500,230],[593,236],[541,273],[545,355],[571,379],[583,407],[781,363],[775,334],[733,428],[752,484],[683,518],[666,559],[854,517],[186,484],[186,498],[278,459],[277,473],[387,462],[388,476],[456,484],[447,495],[331,509],[331,551],[135,559],[507,561],[391,434]];
const dev=(n,x,y,w,h,a='')=>`<use href="#${n}" x="${x}" y="${y}" width="${w}" height="${h}" ${a}/>`;
o+='<path d="M801 176v16" stroke="#6da7b8" stroke-width="3"/><path d="M755 212q6 6 20 5z" fill="#5a9db3"/>';
[[55,221],[54,337],[113,581],[487,584],[628,579],[877,506]].forEach(p=>o+=dev('pc',...p,44,36));
[[314,284],[525,223],[521,364],[784,309],[760,187]].forEach(p=>o+=dev('router',...p,44,30));
[[129,285],[112,487],[677,452]].forEach(p=>o+=dev('switch',...p,50,23));
o+=dev('switch',481,490,50,23,'opacity=".5"')+dev('core',316,428,36,36)+dev('server',386,167,31,51)+dev('server',318,578,31,51)+dev('laptop',988,257,54,37);
T.forEach(([x,y])=>o+=`<path d="M${x-6.500} ${y}L${x} ${y-13}L${x+6.500} ${y}z" fill="#6cc04a"/>`);
[['Planner_PC',35,275],['BLK_B_SW_1',101,326],['BLK_B_R1',294,333],['Nikee_Web_Server',332,237],['Buyer_PC',39,392],['ISP',533,272],['Edge',522,414],['Home_Wireless_Router',696,238],['Home_User_Laptop',943,313],['BLK_C_R1',765,358],['Main_SW',299,483],['BLK_A_SW_1',84,529],['IT_PC_1',103,636],['Application_Server',267,648],['BLK_A_SW_2',453,532],['IT_PC_2',477,639],['Boss_PC',615,634],['BLK_C_SW_1',650,494],['HR_PC',871,562]].forEach(([t,x,y])=>o+=`<text x="${x}" y="${y}">${t}</text>`);
const N=[[137,259,46,'Fa0/1'],[125,206,134,'LAN 40|PLANNER_VLAN|192.168.10.0/24'],[293,183,116,'www.nikee.com'],[459,179,123,'209.68.81.96/29'],[384,236,30,'.98'],[57,273,30,'.18'],[205,265,42,'G0/1'],[277,249,42,'G0/0|.1'],[278,308,42,'G0/1|.1'],[204,306,42,'G0/2'],[81,301,58,'Fa0/10'],[121,338,123,'VLAN 50|BUYER_VLAN|192.168.20.0/24'],[61,391,30,'.28'],[373,299,54,'S0/0/0|.2'],[432,309,104,'10.10.10.0/30'],[467,328,54,'S0/1/1|DCE|.1'],[350,392,41,'G0/2|.6'],[245,407,118,'SVI VLAN 10 .1'],[397,392,104,'10.10.10.4/30'],[482,398,55,'G0/0/1|.5'],[265,427,49,'Fa0/1'],[379,434,49,'Fa0/4'],[158,454,49,'Fa0/1'],[192,497,49,'Fa0/2'],[268,473,49,'Fa0/2'],[367,474,49,'Fa0/3'],[453,454,49,'Fa0/2'],[415,486,49,'Fa0/1'],[335,494,42,'G0/1|.33'],[336,539,123,'172.16.18.32/27'],[119,529,58,'Fa0/23'],[157,586,30,'.48'],[111,636,114,'VLAN 10|IT_VLAN|172.16.20.0/24'],[320,649,30,'.38'],[493,226,55,'G0/0/1|.97'],[603,225,55,'G0/0/0|.129'],[492,279,123,'129.39.85.92/30'],[582,264,54,'S0/1/0|DCE|.93'],[554,317,54,'S0/2/0|.94'],[682,165,88,'Internet port|.130'],[609,196,123,'32.88.18.128/29'],[810,170,39,'LAN|.1'],[900,209,131,'192.168.100.0/25'],[737,288,54,'S0/0/0|.10'],[647,330,104,'10.10.10.8/30'],[597,344,54,'S0/1/0|DCE|.9'],[640,452,42,'G0/1'],[584,398,125,'G0/0/0.20 .1|G0/0/0.30 .1|G0/0/0.88 Native'],[737,430,42,'G0/2'],[778,364,112,'G0/0.20 .2|G0/0.30 .2|G0/0.88 Native'],[755,487,49,'Fa0/2'],[689,513,49,'Fa0/1'],[921,513,30,'.78'],[671,587,30,'.68'],[527,583,30,'.58'],[512,534,57,'Fa0/24'],[485,641,114,'VLAN 10|IT_VLAN|172.16.20.0/24'],[621,637,105,'VLAN 20|BOSS_VLAN|10.20.80.0/24']];
// captions a little wider than their note are drawn to these lengths
const L={'G0/0/0.88 Native':117,'G0/0.88 Native':103,'Internet port':81,'209.68.81.96/29':115,'32.88.18.128/29':115,'172.16.20.0/24':105,'10.10.10.0/30':95,'10.10.10.4/30':95,'10.10.10.8/30':95};
N.forEach(([x,y,w,t])=>{const l=t.split('|');o+=`<rect x="${x}" y="${y}" width="${w}" height="${l.length*19+8}" fill="#f8f8ff"/>`+l.map((s,i)=>`<text x="${x+4}" y="${y+19+i*19}" ${L[s]?`textLength="${L[s]}"`:''}>${s}</text>`).join('')});
topo.innerHTML=o;

// tune tracking so each caption takes its designed width
document.querySelectorAll('[data-w]').forEach(e=>{
 e.style.display='inline-block';e.style.whiteSpace='nowrap';
 const by=e.dataset.by,w=+e.dataset.w,n=by?e.textContent.split(' ').length-1:e.textContent.length;
 const d=(w-e.getBoundingClientRect().width)/n;
 e.style[by?'wordSpacing':'letterSpacing']=d+'px';
});
</script>
</body>
</html>
